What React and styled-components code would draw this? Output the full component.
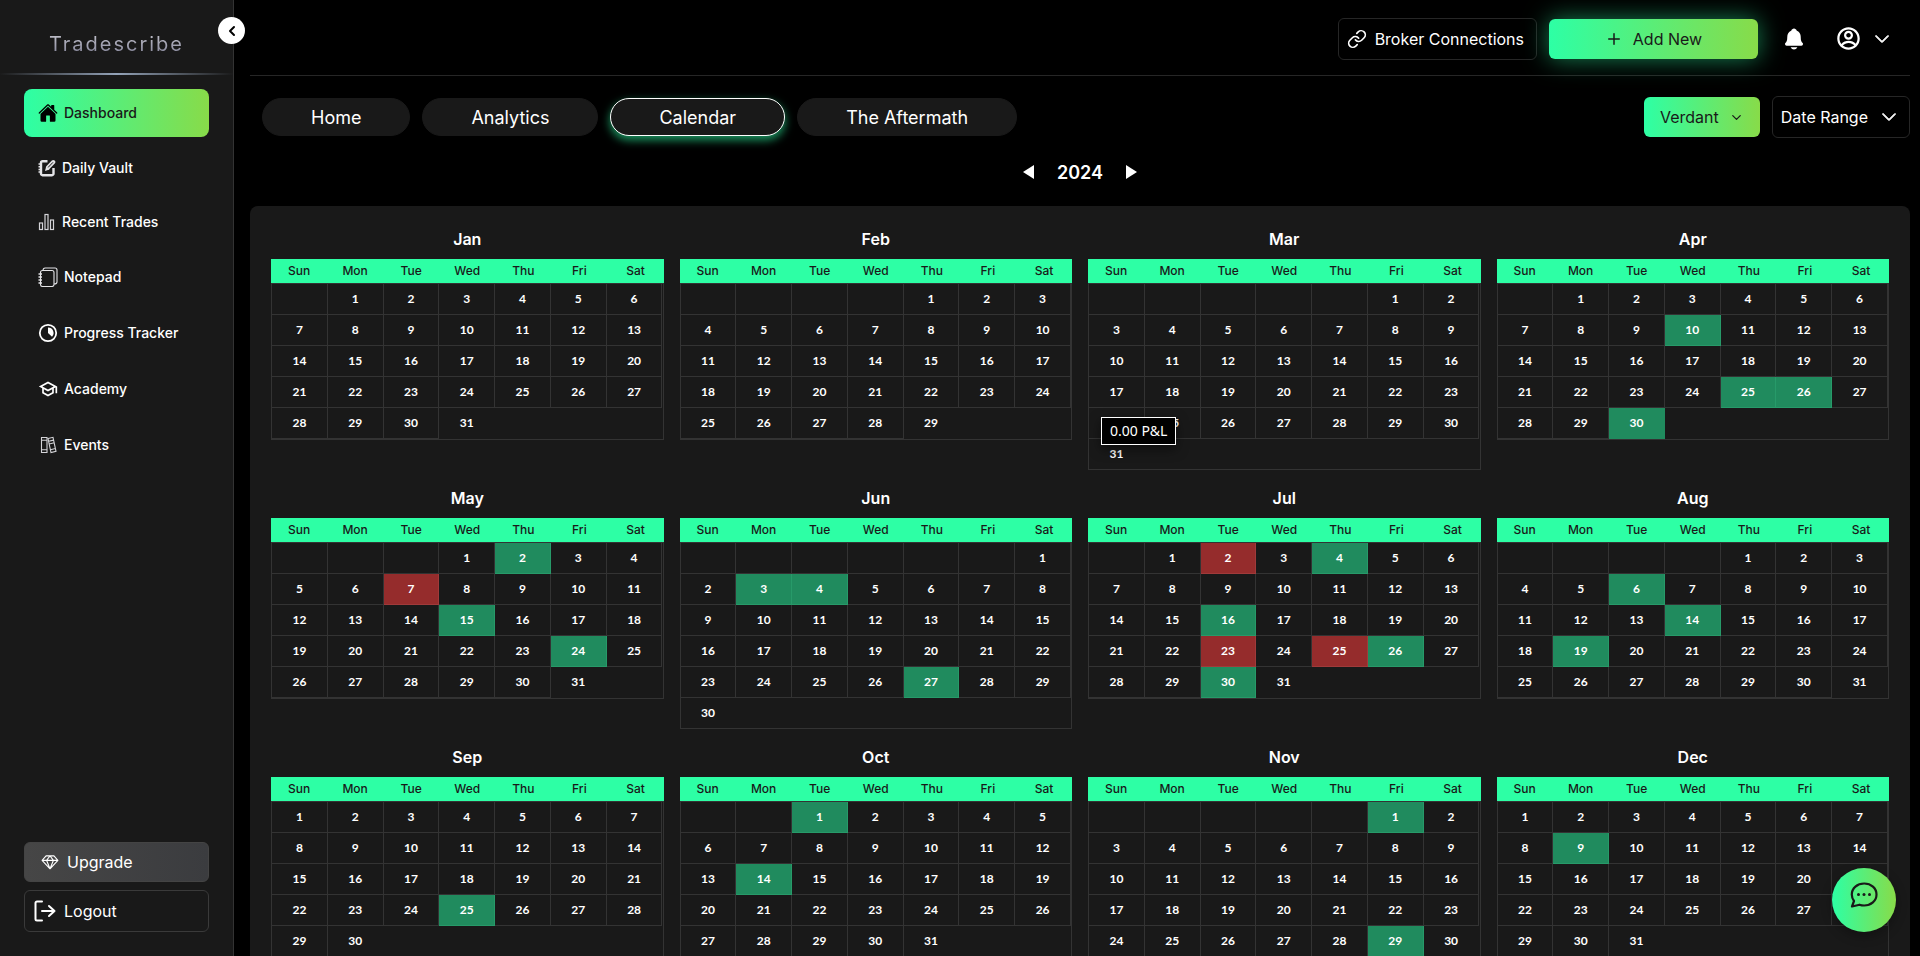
import React, { useState } from "react";
import styled, { createGlobalStyle, css } from "styled-components";
import { IoHome, IoNotifications } from "react-icons/io5";
import { RiAccountCircleLine } from "react-icons/ri";
import { PiSketchLogo } from "react-icons/pi";
import { MdOutlineSchool } from "react-icons/md";
import { BsChevronDown } from "react-icons/bs";
import { FiChevronLeft, FiChevronDown, FiLink, FiPlus } from "react-icons/fi";

const VaultIcon = () => (
  <svg viewBox="0 0 18 18" fill="none" stroke="#e4e4e7">
    <path strokeWidth="2.4" strokeLinejoin="round" d="M9.500 2.200H4.500a1.500 1.500 0 0 0-1.500 1.500v11a1.500 1.500 0 0 0 1.500 1.500h9.500a1.500 1.500 0 0 0 1.500-1.500V9" />
    <path strokeWidth="1.500" d="M0.500 5h3M0.500 7.700h3M0.500 10.400h3M0.500 13.100h3" />
    <path strokeWidth="4" strokeLinecap="round" d="M10 8.500l5.300-5.500" />
    <path strokeWidth="1" stroke="#191919" d="M10 8.500l5-5.200" />
    <path d="M7 12l1.200-4.500 3.300 3z" fill="#e4e4e7" stroke="none" />
  </svg>
);

const BarsIcon = () => (
  <svg viewBox="0 0 18 18" fill="none" stroke="#d4d4d8" strokeWidth="1.2">
    <rect x="1.500" y="10" width="3" height="6.500" />
    <rect x="7" y="1.500" width="3" height="15" />
    <rect x="12.500" y="7" width="3" height="9.500" />
  </svg>
);

const NotepadIcon = () => (
  <svg viewBox="0 0 20 20" fill="none" stroke="#e4e4e7" strokeWidth="1.1">
    <rect x="2.500" y="3.500" width="13.500" height="16" rx="2" />
    <path d="M5 3.500c0-1.500.8-2.500 2.200-2.500H17c1.200 0 2 .8 2 2v12c0 1.200-.8 2-3 2" />
    <path strokeWidth="1.600" d="M0.500 7h3.500M0.500 10h3.500M0.500 13h3.500M0.500 16h3.500" />
  </svg>
);

const ProgressIcon = () => (
  <svg viewBox="0 0 20 20" fill="none" stroke="currentColor" strokeWidth="1.8">
    <circle cx="10" cy="10" r="8.200" />
    <path d="M10 4.500a5.500 5.500 0 0 1 4 9.300L10 10z" fill="currentColor" stroke="none" />
  </svg>
);

const BooksIcon = () => (
  <svg viewBox="0 0 20 20" fill="none" stroke="#d4d4d8" strokeWidth="1.1">
    <path d="M3.500 2.500h5.500v15H3.500zM3.500 5.300h5.500M3.500 14.700h5.500" />
    <path d="M10 3.500l5-1.200 3 14-5 1.200zM10.600 6.300l5-1.200M12.400 14.700l5-1.200M11.200 9l5-1.200" />
  </svg>
);

const LogoutIcon = () => (
  <svg
    viewBox="0 0 22 22"
    fill="none"
    stroke="currentColor"
    strokeWidth="2"
    strokeLinecap="round"
    strokeLinejoin="round"
  >
    <path d="M8 1.500H3A1.500 1.500 0 0 0 1.500 3v16A1.500 1.500 0 0 0 3 20.500H8M8 11h12.500M15 6l5.500 5-5.500 5" />
  </svg>
);

const ChatIcon = () => (
  <svg viewBox="0 0 28 28" fill="none" stroke="currentColor" strokeWidth="2.200">
    <path
      strokeLinejoin="round"
      d="M2 25.500l2-5.500C2.500 18 1.800 16 1.800 13.500 1.800 7 7.300 2.500 14.200 2.500S26.500 7 26.500 13.500 21 24.500 14.200 24.500c-1.700 0-3.300-.3-4.700-.8z"
    />
    <g fill="currentColor" stroke="none">
      <circle cx="8.500" cy="13.500" r="1.500" />
      <circle cx="14" cy="13.500" r="1.500" />
      <circle cx="19.500" cy="13.500" r="1.500" />
    </g>
  </svg>
);

const menu = [
  { name: "Dashboard", icon: <IoHome />, size: 20 },
  { name: "Daily Vault", icon: <VaultIcon />, size: 18 },
  { name: "Recent Trades", icon: <BarsIcon />, size: 18 },
  { name: "Notepad", icon: <NotepadIcon />, size: 20 },
  { name: "Progress Tracker", icon: <ProgressIcon />, size: 20 },
  { name: "Academy", icon: <MdOutlineSchool />, size: 20 },
  { name: "Events", icon: <BooksIcon />, size: 20 },
];

const tabs = ["Home", "Analytics", "Calendar", "The Aftermath"];
const weekdays = ["Sun", "Mon", "Tue", "Wed", "Thu", "Fri", "Sat"];

const months = [
  { name: "Jan" },
  { name: "Feb" },
  { name: "Mar" },
  { name: "Apr", win: [10, 25, 26, 30] },
  { name: "May", win: [2, 15, 24], loss: [7] },
  { name: "Jun", win: [3, 4, 27] },
  { name: "Jul", win: [4, 16, 26, 30], loss: [2, 23, 25] },
  { name: "Aug", win: [6, 14, 19] },
  { name: "Sep", win: [25] },
  { name: "Oct", win: [1, 14] },
  { name: "Nov", win: [1, 29] },
  { name: "Dec", win: [9] },
];

// split a month into rows of seven, with null before the first day
function getWeeks(year, month) {
  const start = new Date(year, month, 1).getDay();
  const total = new Date(year, month + 1, 0).getDate();
  const cells = [
    ...Array(start).fill(null),
    ...Array.from({ length: total }, (_, i) => i + 1),
  ];
  const weeks = [];
  for (let i = 0; i < cells.length; i += 7) {
    weeks.push(cells.slice(i, i + 7));
  }
  return weeks;
}

function Month({ year, index, name, win = [], loss = [] }) {
  const getResult = (day) => {
    if (win.includes(day)) return "win";
    if (loss.includes(day)) return "loss";
    return null;
  };

  return (
    <MonthTable>
      <caption>{name}</caption>
      <thead>
        <tr>
          {weekdays.map((day) => (
            <th key={day} scope="col">
              {day}
            </th>
          ))}
        </tr>
      </thead>
      <tbody>
        {getWeeks(year, index).map((week, i) => (
          <tr key={i}>
            {week.map((day, j) => (
              <Day key={j} $result={getResult(day)}>
                {day}
                {name === "Mar" && day === 24 && <Tooltip role="tooltip">0.00 P&amp;L</Tooltip>}
              </Day>
            ))}
          </tr>
        ))}
      </tbody>
    </MonthTable>
  );
}

export default function App() {
  const [page, setPage] = useState("Dashboard");
  const [tab, setTab] = useState("Calendar");
  const [year, setYear] = useState(2024);

  return (
    <Layout>
      <GlobalStyle />
      <Sidebar>
        <Collapse aria-label="Collapse sidebar">
          <FiChevronLeft />
        </Collapse>
        <Logo>Tradescribe</Logo>
        <Menu>
          {menu.map((item) => (
            <li key={item.name}>
              <MenuLink
                href="#"
                $size={item.size}
                $active={page === item.name}
                onClick={() => setPage(item.name)}
              >
                {item.icon}
                {item.name}
              </MenuLink>
            </li>
          ))}
        </Menu>
        <SideButtons>
          <UpgradeButton>
            <PiSketchLogo />
            Upgrade
          </UpgradeButton>
          <LogoutButton>
            <LogoutIcon />
            Logout
          </LogoutButton>
        </SideButtons>
      </Sidebar>

      <Main>
        <Header>
          <OutlineButton>
            <FiLink />
            Broker Connections
          </OutlineButton>
          <AddButton>
            <FiPlus />
            Add New
          </AddButton>
          <BellButton aria-label="Notifications">
            <IoNotifications />
          </BellButton>
          <AccountButton aria-label="Account">
            <RiAccountCircleLine />
            <BsChevronDown />
          </AccountButton>
        </Header>

        <Toolbar>
          <Tabs>
            {tabs.map((name) => (
              <Tab key={name} $active={tab === name} onClick={() => setTab(name)}>
                {name}
              </Tab>
            ))}
          </Tabs>
          <Filters>
            <ThemeButton>
              Verdant
              <FiChevronDown />
            </ThemeButton>
            <RangeButton>
              Date Range
              <BsChevronDown />
            </RangeButton>
          </Filters>
        </Toolbar>

        <YearPicker>
          <YearButton aria-label="Previous year" onClick={() => setYear(year - 1)}>
            <svg viewBox="0 0 12 14">
              <path d="M11 0v14L0 7z" fill="currentColor" />
            </svg>
          </YearButton>
          {year}
          <YearButton aria-label="Next year" onClick={() => setYear(year + 1)}>
            <svg viewBox="0 0 12 14">
              <path d="M1 0v14l11-7z" fill="currentColor" />
            </svg>
          </YearButton>
        </YearPicker>

        <Calendar>
          {months.map((month, index) => (
            <Month key={month.name} year={year} index={index} {...month} />
          ))}
        </Calendar>
      </Main>

      <ChatButton aria-label="Open chat">
        <ChatIcon />
      </ChatButton>
    </Layout>
  );
}

const GlobalStyle = createGlobalStyle`
  * {
    box-sizing: border-box;
  }
  body {
    margin: 0;
    background: #000;
    color: #fff;
    font-family: Inter, "Liberation Sans", sans-serif;
    font-size: 16px;
    overflow: hidden;
  }
  button {
    font: inherit;
    color: inherit;
    background: none;
    border: none;
    padding: 0;
    cursor: pointer;
  }
`;

const gradient = css`
  background: linear-gradient(to right, #2dffa5, #88db49);
`;

const flexCenter = css`
  display: flex;
  align-items: center;
  justify-content: center;
`;

const Layout = styled.div`
  display: flex;
  height: 100vh;
`;

const Sidebar = styled.aside`
  position: relative;
  display: flex;
  flex-direction: column;
  flex-shrink: 0;
  width: 234px;
  background: #191919;
  border-right: 1px solid #333;
`;

const Collapse = styled.button`
  ${flexCenter}
  position: absolute;
  top: 17px;
  right: -12px;
  width: 27px;
  height: 27px;
  border-radius: 50%;
  background: #fff;
  color: #000;
  svg {
    width: 16px;
    height: 16px;
    stroke-width: 3px;
  }
`;

const Logo = styled.div`
  padding: 30px 0 15px;
  font-size: 20px;
  line-height: 28px;
  letter-spacing: 2px;
  text-align: center;
  color: transparent;
  background: linear-gradient(#e4e4e7 30%, #85859a 75%) text;
  border-bottom: 2px solid;
  border-image: linear-gradient(to right, transparent, #94a3b8, transparent) 1;
`;

const Menu = styled.ul`
  display: flex;
  flex-direction: column;
  gap: 8px;
  margin: 0;
  padding: 14px 24px;
  list-style: none;
`;

const MenuLink = styled.a`
  display: flex;
  align-items: center;
  gap: 6px;
  padding: 14px;
  border-radius: 8px;
  font-size: 14px;
  line-height: 18px;
  font-weight: 500;
  color: #fff;
  text-decoration: none;
  svg {
    width: ${({ $size }) => $size}px;
    height: ${({ $size }) => $size}px;
  }
  ${({ $active }) =>
    $active &&
    css`
      ${gradient}
      color: #191919;
      svg {
        color: #000;
      }
    `}
`;

const SideButtons = styled.div`
  display: flex;
  flex-direction: column;
  gap: 8px;
  margin-top: auto;
  padding: 24px;
`;

const UpgradeButton = styled.button`
  display: flex;
  align-items: center;
  gap: 8px;
  height: 40px;
  padding: 0 16px;
  border: 1px solid #444;
  border-radius: 6px;
  background: linear-gradient(to right, #464646, #3b3c3f);
  svg {
    width: 18px;
    height: 18px;
  }
`;

const LogoutButton = styled.button`
  display: flex;
  align-items: center;
  gap: 8px;
  height: 42px;
  padding: 0 9px;
  border: 1px solid #3a3a3a;
  border-radius: 6px;
  svg {
    width: 22px;
    height: 22px;
  }
`;

const Main = styled.main`
  flex: 1;
  min-width: 0;
  padding: 0 10px 0 16px;
`;

const Header = styled.header`
  display: flex;
  align-items: center;
  justify-content: flex-end;
  height: 76px;
  padding: 2px 20px 0 0;
  border-bottom: 1px solid #262626;
`;

const OutlineButton = styled.button`
  ${flexCenter}
  gap: 8px;
  height: 42px;
  padding: 0 12px 0 8px;
  border: 1px solid #262626;
  border-radius: 6px;
  svg {
    width: 20px;
    height: 20px;
  }
`;

const AddButton = styled.button`
  ${flexCenter}
  ${gradient}
  gap: 10px;
  width: 209px;
  height: 40px;
  margin: 0 24px 0 12px;
  border-radius: 6px;
  color: #191919;
  box-shadow: 0 0 24px rgba(45, 255, 165, 0.5);
  svg {
    width: 18px;
    height: 18px;
  }
`;

const BellButton = styled.button`
  ${flexCenter}
  width: 24px;
  height: 24px;
  margin-right: 29px;
  svg {
    width: 24px;
    height: 24px;
  }
`;

const AccountButton = styled.button`
  ${flexCenter}
  gap: 12px;
  svg {
    width: 27px;
    height: 27px;
  }
  svg:last-child {
    width: 16px;
    height: 16px;
    stroke-width: 1px;
  }
`;

const Toolbar = styled.div`
  display: flex;
  align-items: center;
  justify-content: space-between;
  padding: 20px 0 20px 12px;
`;

const Tabs = styled.nav`
  display: flex;
  gap: 12px;
`;

const Tab = styled.button`
  height: 38px;
  padding: 0 48px;
  border: 1px solid #191919;
  border-radius: 20px;
  background: #191919;
  font-size: 18px;
  ${({ $active }) =>
    $active &&
    css`
      border-color: #fff;
      box-shadow: 0 4px 10px rgba(45, 255, 165, 0.6);
    `}
`;

const Filters = styled.div`
  display: flex;
  align-items: center;
  gap: 12px;
`;

const ThemeButton = styled.button`
  ${flexCenter}
  ${gradient}
  gap: 10px;
  height: 40px;
  padding: 0 16px;
  border-radius: 6px;
  color: #191919;
  svg {
    width: 15px;
    height: 15px;
  }
`;

const RangeButton = styled(OutlineButton)`
  gap: 13px;
  padding: 0 12px 0 8px;
  svg {
    width: 16px;
    height: 16px;
    stroke-width: 1px;
  }
`;

const YearPicker = styled.div`
  ${flexCenter}
  gap: 22px;
  height: 28px;
  margin-bottom: 20px;
  font-size: 18px;
  font-weight: 600;
`;

const YearButton = styled.button`
  display: flex;
  svg {
    width: 12px;
    height: 14px;
  }
`;

const Calendar = styled.section`
  display: grid;
  grid-template-columns: repeat(4, 1fr);
  align-items: start;
  gap: 16px;
  padding: 21px;
  border-radius: 8px;
  background: #191919;
`;

const MonthTable = styled.table`
  display: block;
  caption {
    display: block;
    padding-bottom: 8px;
    font-size: 16px;
    font-weight: 600;
    line-height: 24px;
  }
  thead {
    display: block;
    background: #2dffa5;
    color: #191919;
  }
  tr {
    display: grid;
    grid-template-columns: repeat(7, 1fr);
  }
  th {
    padding: 0;
    font-size: 12px;
    font-weight: 500;
    line-height: 24px;
  }
  tbody {
    display: block;
    border: 1px solid #333;
  }
  tbody tr:last-child td:last-child {
    border-color: transparent;
    border-bottom: none;
  }
`;

const results = { win: "#208b5e", loss: "#952c2c" };
const resultLines = { win: "#279a69", loss: "#a03a3a" };

const Day = styled.td`
  position: relative;
  min-height: 30px;
  padding: 0;
  border-right: 1px solid ${({ $result }) => resultLines[$result] || "#333"};
  border-bottom: 1px solid ${({ $result }) => resultLines[$result] || "#333"};
  background: ${({ $result }) => results[$result] || "none"};
  font-family: Lato, "Liberation Sans", sans-serif;
  font-size: 12px;
  font-weight: 700;
  line-height: 30px;
  text-align: center;
`;

const Tooltip = styled.span`
  position: absolute;
  z-index: 1;
  top: 9px;
  left: 12px;
  padding: 0 8px;
  border: 1px solid #fff;
  background: #000;
  box-shadow: 0 4px 12px rgba(0, 0, 0, 0.5);
  font-family: "Noto Sans", sans-serif;
  font-size: 14px;
  font-weight: 400;
  line-height: 26px;
  white-space: nowrap;
`;

const ChatButton = styled.button`
  ${flexCenter}
  ${gradient}
  position: fixed;
  right: 24px;
  bottom: 24px;
  width: 64px;
  height: 64px;
  padding-bottom: 10px;
  border-radius: 50%;
  color: #191919;
  box-shadow: 0 4px 12px rgba(0, 0, 0, 0.3);
  svg {
    width: 28px;
    height: 28px;
  }
`;
